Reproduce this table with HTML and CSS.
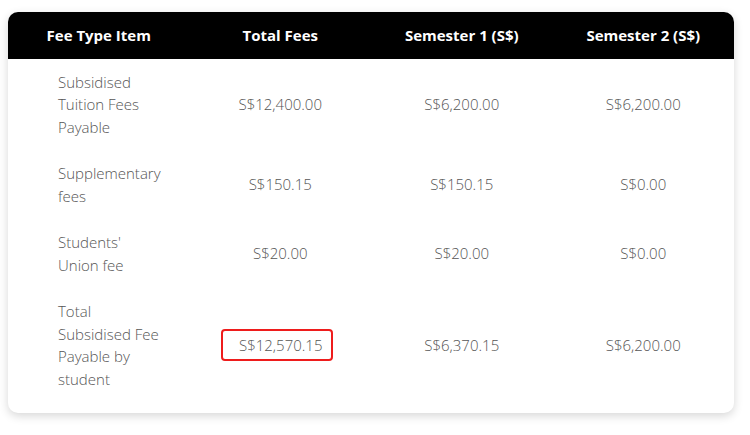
FILE: index.html
```html
<!DOCTYPE html>
<html lang="en">
<head>
<meta charset="utf-8">
<title>Fees</title>
<link rel="stylesheet" href="styles.css">
</head>
<body>
<div class="card">
  <table class="fees">
    <thead>
      <tr>
        <th>Fee Type Item</th>
        <th>Total Fees</th>
        <th>Semester 1 (S$)</th>
        <th>Semester 2 (S$)</th>
      </tr>
    </thead>
    <tbody>
      <tr>
        <td class="item">Subsidised Tuition Fees Payable</td>
        <td>S$12,400.00</td>
        <td>S$6,200.00</td>
        <td>S$6,200.00</td>
      </tr>
      <tr>
        <td class="item">Supplementary fees</td>
        <td>S$150.15</td>
        <td>S$150.15</td>
        <td>S$0.00</td>
      </tr>
      <tr>
        <td class="item">Students' Union fee</td>
        <td>S$20.00</td>
        <td>S$20.00</td>
        <td>S$0.00</td>
      </tr>
      <tr>
        <td class="item">Total Subsidised Fee Payable by student</td>
        <td><span class="highlight">S$12,570.15</span></td>
        <td>S$6,370.15</td>
        <td>S$6,200.00</td>
      </tr>
    </tbody>
  </table>
</div>
</body>
</html>
```
FILE: styles.css
```css
html, body {
  margin: 0;
  background: #ffffff;
}
body {
  padding: 12px 8px;
  font-family: "Open Sans", "Liberation Sans", sans-serif;
}
.card {
  width: 726px;
  background: #fff;
  border-radius: 10px;
  box-shadow: 0 3px 10px rgba(0, 0, 0, 0.16);
  overflow: hidden;
  padding-bottom: 11px;
}
.fees {
  width: 100%;
  border-collapse: collapse;
  table-layout: fixed;
}
.fees th {
  background: #000;
  color: #fff;
  font-weight: 700;
  font-size: 15px;
  line-height: 22.5px;
  padding: 12px 0;
  text-align: center;
}
.fees td {
  font-size: 15px;
  font-weight: 300;
  line-height: 22.5px;
  color: #555;
  text-align: center;
  vertical-align: middle;
  padding: 12px 0;
}
.fees td.item {
  text-align: left;
  padding-left: 50px;
  padding-right: 27px;
}
.highlight {
  display: inline-block;
  border: 2px solid #ee1c1c;
  border-radius: 4px;
  padding: 3px 9px 3px 16px;
  margin-right: 6px;
}
```
